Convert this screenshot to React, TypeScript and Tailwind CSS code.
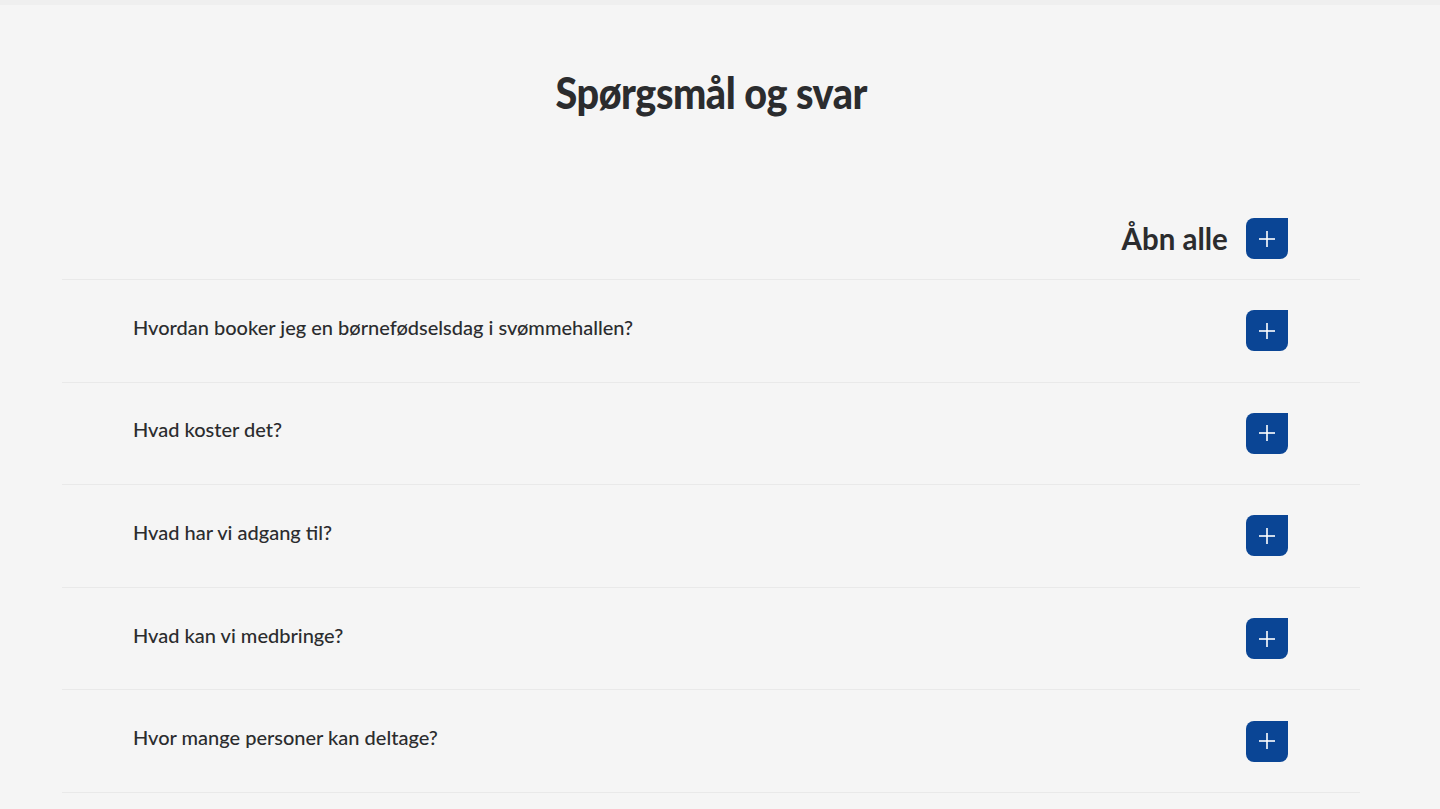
import { useState } from 'react';

const QUESTIONS = [
  'Hvordan booker jeg en børnefødselsdag i svømmehallen?',
  'Hvad koster det?',
  'Hvad har vi adgang til?',
  'Hvad kan vi medbringe?',
  'Hvor mange personer kan deltage?',
];

function PlusButton({ open, onClick, label }: { open: boolean; onClick: () => void; label: string }) {
  return (
    <button
      type="button"
      aria-label={label}
      aria-expanded={open}
      onClick={onClick}
      className="flex h-[41px] w-[42px] shrink-0 items-center justify-center rounded-[8px] rounded-tr-none bg-[#0a4595]"
    >
      <svg width="18" height="18" viewBox="0 0 18 18" aria-hidden="true">
        <path d="M1 9h16" stroke="white" strokeWidth="1.6" />
        {!open && <path d="M9 1v16" stroke="white" strokeWidth="1.6" />}
      </svg>
    </button>
  );
}

export default function App() {
  const [openRows, setOpenRows] = useState<boolean[]>(QUESTIONS.map(() => false));
  const allOpen = openRows.every(Boolean);

  return (
    <div className="min-h-[809px] bg-[#f5f5f5] font-['Lato',sans-serif] text-[#2b2c2e]">
      <div className="h-[5px] bg-[#efefef]" />
      <div className="pl-[62px] pr-[80px]">
        <div className="flex justify-center pt-[60px]">
          <h1 className="inline-block scale-x-[0.92] text-[43px] font-black leading-[56px] tracking-[-0.5px]">
            Spørgsmål og svar
          </h1>
        </div>

        <div className="mt-[97px] flex items-center justify-end gap-[18px] px-[72px] pb-[20px]">
          <span className="inline-block origin-right scale-x-[0.95] text-[31px] font-bold leading-none">
            Åbn alle
          </span>
          <PlusButton
            open={allOpen}
            label="Åbn alle"
            onClick={() => setOpenRows(QUESTIONS.map(() => !allOpen))}
          />
        </div>

        <ul className="border-t border-[#e9e9e9]">
          {QUESTIONS.map((q, i) => (
            <li key={q} className="border-b border-[#e9e9e9]">
              <div className="flex h-[101.6px] items-center justify-between pl-[71px] pr-[72px]">
                <span className="-mt-[8px] text-[20px] font-medium">{q}</span>
                <PlusButton
                  open={openRows[i]}
                  label={q}
                  onClick={() => setOpenRows((rows) => rows.map((r, j) => (j === i ? !r : r)))}
                />
              </div>
            </li>
          ))}
        </ul>
      </div>
    </div>
  );
}
